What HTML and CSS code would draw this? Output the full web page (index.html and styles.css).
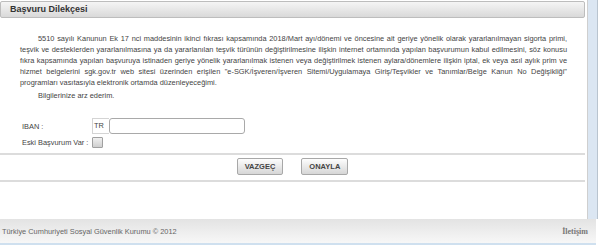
FILE: index.html
```html
<!DOCTYPE html>
<html lang="tr">
<head>
    <meta charset="UTF-8">
    <title>Başvuru Dilekçesi</title>
    <link rel="stylesheet" href="styles.css">
</head>
<body>
    <div class="frame">
        <div class="content">
            <div class="panel-title">Başvuru Dilekçesi</div>

            <p class="letter">5510 sayılı Kanunun Ek 17 nci maddesinin ikinci fıkrası kapsamında 2018/Mart ayı/dönemi ve öncesine ait geriye yönelik olarak yararlanılmayan sigorta primi, teşvik ve desteklerden yararlanılmasına ya da yararlanılan teşvik türünün değiştirilmesine ilişkin internet ortamında yapılan başvurumun kabul edilmesini, söz konusu fıkra kapsamında yapılan başvuruya istinaden geriye yönelik yararlanılmak istenen veya değiştirilmek istenen aylara/dönemlere ilişkin iptal, ek veya asıl aylık prim ve hizmet belgelerini sgk.gov.tr web sitesi üzerinden erişilen "e-SGK/İşveren/İşveren Sitemi/Uygulamaya Giriş/Teşvikler ve Tanımlar/Belge Kanun No Değişikliği" programları vasıtasıyla elektronik ortamda düzenleyeceğimi.</p>

            <p class="letter closing">Bilgilerinize arz ederim.</p>

            <div class="form">
                <div class="row">
                    <label for="iban">IBAN :</label>
                    <span class="prefix">TR</span>
                    <input type="text" id="iban">
                </div>
                <div class="row">
                    <label for="eski">Eski Başvurum Var :</label>
                    <span class="check" id="eski"></span>
                </div>
            </div>

            <div class="actions">
                <button class="btn">VAZGEÇ</button>
                <button class="btn">ONAYLA</button>
            </div>
        </div>
        <div class="side"></div>
    </div>

    <div class="footer">
        <span>Türkiye Cumhuriyeti Sosyal Güvenlik Kurumu © 2012</span>
        <a href="#" class="contact">İletişim</a>
    </div>
</body>
</html>
```

FILE: styles.css
```css
body {
    margin: 0;
    font-family: 'Liberation Sans', Arial, sans-serif;
    font-size: 7.4px;
    color: #444;
    background: #fff;
    width: 598px;
}
.frame {
    display: flex;
    height: 219px;
}
.content {
    width: 587px;
    border-right: 1px solid #cfcfcf;
    padding-top: 1px;
}
.side {
    width: 9px;
    background: #dbe6f2;
    border-right: 1px solid #b9c4cf;
}
.panel-title {
    margin-right: 2px;
    height: 15px;
    line-height: 15px;
    padding-left: 9px;
    font-size: 9px;
    font-weight: bold;
    color: #333;
    border: 1px solid #bdbdbd;
    border-radius: 2px;
    background: linear-gradient(#f5f5f5, #d9d9d9);
}
.letter {
    margin: 15px 20px 0 20px;
    line-height: 11px;
    text-align: justify;
    text-indent: 18px;
}
.closing {
    margin-top: 2px;
}
.form {
    margin: 17px 0 0 22px;
}
.row {
    display: flex;
    align-items: center;
    height: 16px;
    white-space: nowrap;
}
.row label {
    width: 70px;
}
.prefix {
    width: 15px;
    height: 14px;
    line-height: 14px;
    padding-left: 1px;
    border: 1px solid #d4d4d4;
    border-right: none;
    background: #fff;
}
input {
    width: 130px;
    height: 12px;
    margin: 0;
    padding: 1px 2px;
    border: 1px solid #a9a9a9;
    border-radius: 3px;
    font-size: 8px;
}
.check {
    width: 9px;
    height: 9px;
    border: 1px solid #a0a0a0;
    border-radius: 1px;
    background: linear-gradient(#f0f0f0, #cfcfcf);
}
.actions {
    margin-top: 3px;
    margin-right: 2px;
    border-top: 2px solid #dcdcdc;
    border-bottom: 2px solid #dcdcdc;
    padding: 3px 0 5px;
    display: flex;
    justify-content: center;
    gap: 18px;
}
.btn {
    height: 17px;
    padding: 0 7px;
    font-family: 'Liberation Sans', Arial, sans-serif;
    font-size: 7.5px;
    font-weight: bold;
    color: #444;
    border: 1px solid #a8a8a8;
    border-radius: 2px;
    background: linear-gradient(#fdfdfd, #d6d6d6);
}
.footer {
    width: 596px;
    height: 26px;
    display: flex;
    align-items: center;
    justify-content: space-between;
    padding: 0 8px 0 2px;
    box-sizing: border-box;
    font-family: 'Liberation Sans', Arial, sans-serif;
    font-size: 7.4px;
    color: #666;
    background: linear-gradient(#e3e3e3, #f7f7f7);
    border-bottom: 2px solid #cfe0ef;
    box-shadow: 0 1px 0 #9a9a9a;
}
.contact {
    font-family: 'Liberation Serif', 'Times New Roman', serif;
    font-weight: bold;
    font-size: 8px;
    color: #777;
    text-decoration: none;
}
```
